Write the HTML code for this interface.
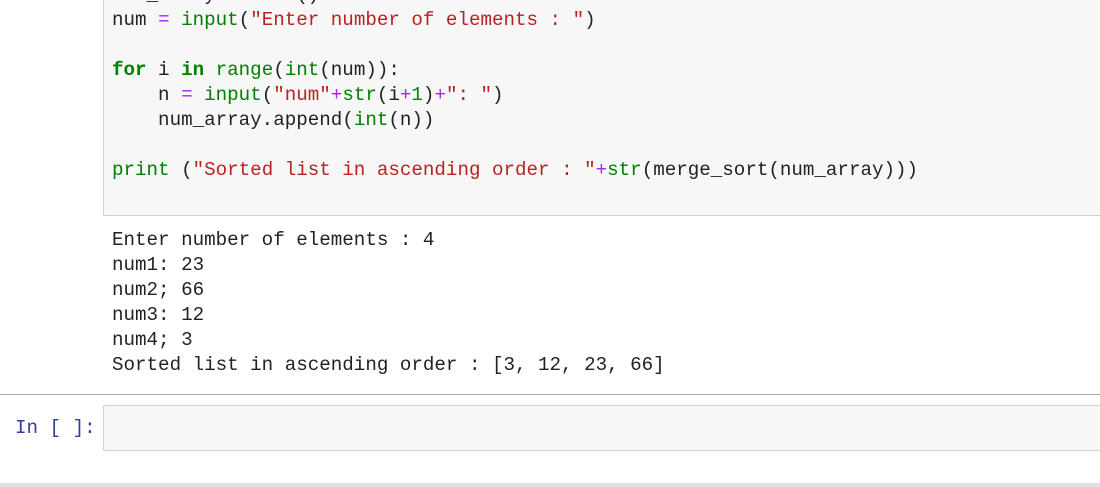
<!DOCTYPE html>
<html><head><style>
body{margin:0;width:1100px;height:487px;background:#fff;position:relative;overflow:hidden;font-family:"Liberation Mono",monospace;}
.box{position:absolute;left:103px;background:#f7f7f7;border:1px solid #cfcfcf;border-radius:2px;box-sizing:border-box;}
pre{margin:0;position:absolute;left:112px;font-family:"Liberation Mono",monospace;font-size:19.2px;line-height:25px;color:#222;}
.k{color:#008000;font-weight:bold}.b{color:#008000}.s{color:#ba2121}.o{color:#aa22ff}
.n{color:#080}
</style></head><body>
<div class="box" style="top:-10px;width:1010px;height:226px;"></div>
<pre style="top:-17px">num_array = <span>list</span>()
num <span class="o">=</span> <span class="b">input</span>(<span class="s">"Enter number of elements : "</span>)

<span class="k">for</span> i <span class="k">in</span> <span class="b">range</span>(<span class="b">int</span>(num)):
    n <span class="o">=</span> <span class="b">input</span>(<span class="s">"num"</span><span class="o">+</span><span class="b">str</span>(i<span class="o">+</span><span class="n">1</span>)<span class="o">+</span><span class="s">": "</span>)
    num_array.append(<span class="b">int</span>(n))

<span class="b">print</span> (<span class="s">"Sorted list in ascending order : "</span><span class="o">+</span><span class="b">str</span>(merge_sort(num_array)))</pre>
<pre style="top:228px">Enter number of elements : 4
num1: 23
num2; 66
num3: 12
num4; 3
Sorted list in ascending order : [3, 12, 23, 66]</pre>
<div style="position:absolute;left:0;top:394px;width:1100px;height:1px;background:#ababab"></div>
<pre style="left:15px;top:416px;color:#303f9f">In [ ]:</pre>
<div class="box" style="top:405px;width:1010px;height:46px;"></div>
<div style="position:absolute;left:0;top:483px;width:1100px;height:4px;background:#e0e0e0"></div>
</body></html>
